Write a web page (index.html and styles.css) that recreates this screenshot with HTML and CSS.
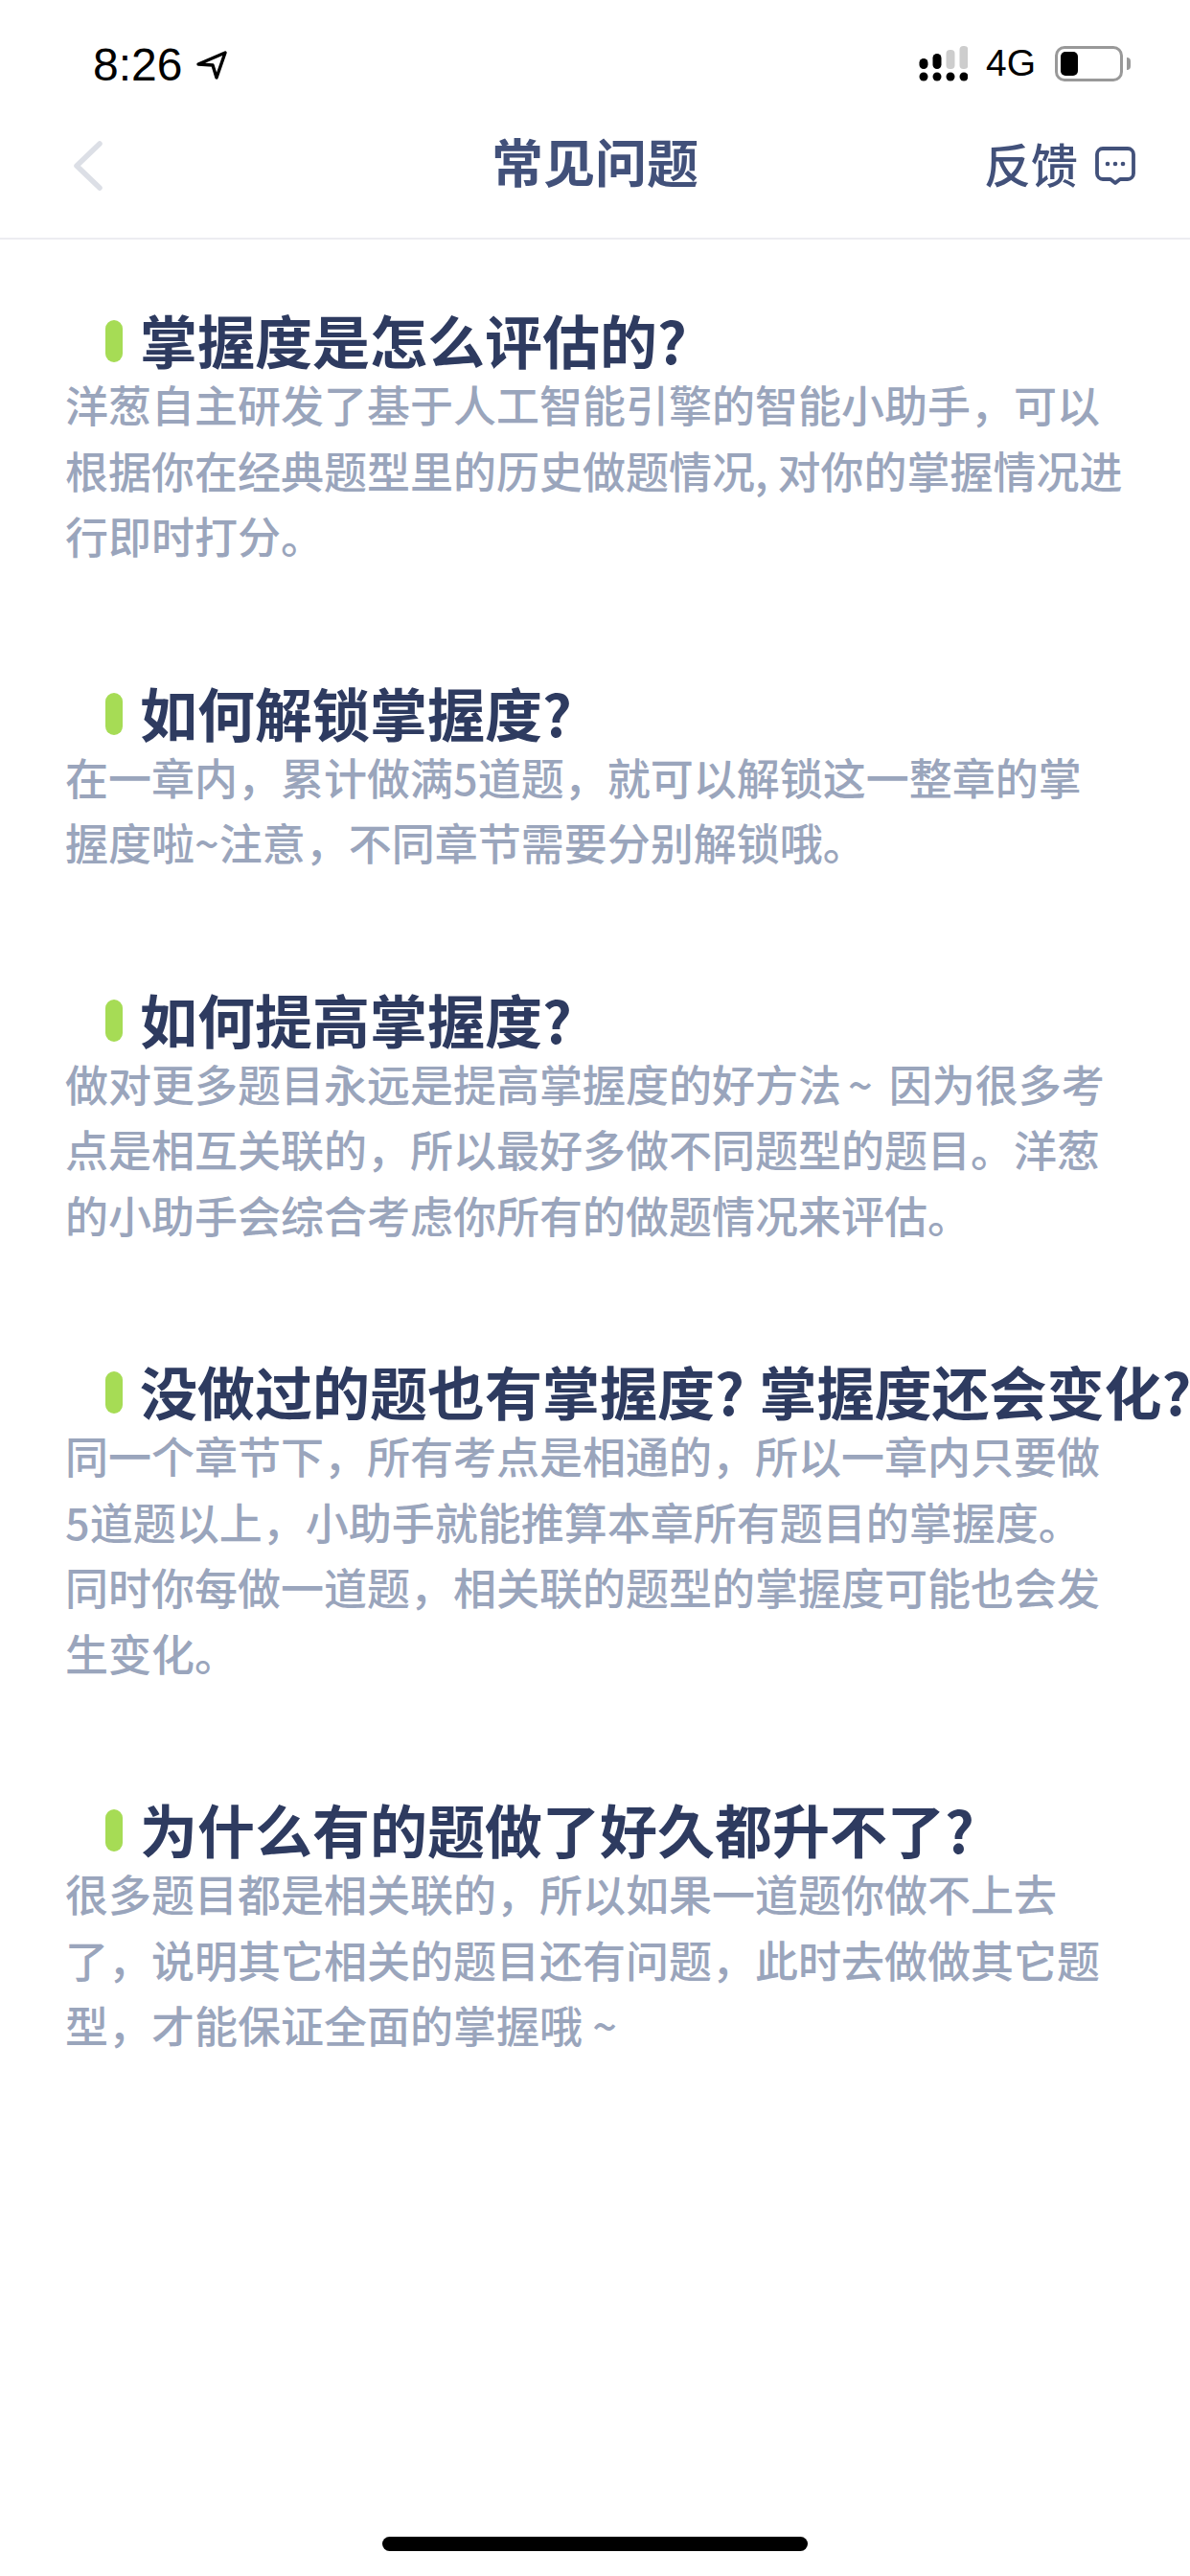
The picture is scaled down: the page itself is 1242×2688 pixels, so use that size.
FILE: index.html
```html
<!DOCTYPE html>
<html lang="zh-CN">
<head>
<meta charset="utf-8">
<title>常见问题</title>
<link rel="stylesheet" href="styles.css">
</head>
<body>
<div class="page">
  <div class="status">
    <div class="status-left">
      <span class="time">8:26</span>
      <svg class="loc" viewBox="0 0 32 30"><path d="M2 14 30 2 21 28 17 15Z" fill="none" stroke="#000" stroke-width="3.4" stroke-linejoin="round"/></svg>
    </div>
    <div class="status-right">
      <svg class="signal" viewBox="0 0 51 37">
        <g fill="#000"><circle cx="5" cy="32" r="4.5"/><circle cx="19" cy="32" r="4.5"/><circle cx="33" cy="32" r="4.5"/><circle cx="47" cy="32" r="4.5"/>
        <rect x="0.5" y="13" width="9" height="11" rx="4.5"/><rect x="14.5" y="8" width="9" height="16" rx="4.5"/></g>
        <g fill="#cdcdcd"><rect x="28.500" y="4" width="9" height="20" rx="4"/><rect x="42.5" y="0" width="9" height="24" rx="4"/></g>
      </svg>
      <span class="net">4G</span>
      <div class="battery"><div class="battery-fill"></div></div>
      <div class="battery-nub"></div>
    </div>
  </div>
  <header class="nav">
    <svg class="back" viewBox="0 0 33 54"><path d="M29 4 5 27l24 23" fill="none" stroke="#dcdfe6" stroke-width="5.500" stroke-linecap="round" stroke-linejoin="round"/></svg>
    <h1 class="nav-title">常见问题</h1>
    <div class="nav-action">
      <span class="nav-label">反馈</span>
      <svg class="chat" viewBox="0 0 42 40"><path d="M8 2h26a6 6 0 0 1 6 6v20a6 6 0 0 1-6 6h-8l-5 4-5-4H8a6 6 0 0 1-6-6V8a6 6 0 0 1 6-6Z" fill="none" stroke="#42517a" stroke-width="3.800" stroke-linejoin="round"/><circle cx="13" cy="18" r="2.300" fill="#42517a"/><circle cx="21" cy="18" r="2.300" fill="#42517a"/><circle cx="29" cy="18" r="2.300" fill="#42517a"/></svg>
    </div>
  </header>
  <main class="faq">
    <section class="item">
      <h2 class="q">掌握度是怎么评估的?</h2>
      <p class="a">洋葱自主研发了基于人工智能引擎的智能小助手，可以根据你在经典题型里的历史做题情况, 对你的掌握情况进行即时打分。</p>
    </section>
    <section class="item">
      <h2 class="q">如何解锁掌握度?</h2>
      <p class="a">在一章内，累计做满5道题，就可以解锁这一整章的掌握度啦~注意，不同章节需要分别解锁哦。</p>
    </section>
    <section class="item">
      <h2 class="q">如何提高掌握度?</h2>
      <p class="a">做对更多题目永远是提高掌握度的好方法<span class="tilde">~</span> 因为很多考点是相互关联的，所以最好多做不同题型的题目。洋葱的小助手会综合考虑你所有的做题情况来评估。</p>
    </section>
    <section class="item">
      <h2 class="q">没做过的题也有掌握度? 掌握度还会变化?</h2>
      <p class="a">同一个章节下，所有考点是相通的，所以一章内只要做5道题以上，小助手就能推算本章所有题目的掌握度。同时你每做一道题，相关联的题型的掌握度可能也会发生变化。</p>
    </section>
    <section class="item">
      <h2 class="q">为什么有的题做了好久都升不了?</h2>
      <p class="a">很多题目都是相关联的，所以如果一道题你做不上去了，说明其它相关的题目还有问题，此时去做做其它题型，才能保证全面的掌握哦 ~</p>
    </section>
  </main>
  <div class="home"></div>
</div>
</body>
</html>
```
FILE: styles.css
```css
* { box-sizing: border-box; }
html, body { margin: 0; padding: 0; background: #fff; }
body { font-family: "Noto Sans CJK SC", "Noto Sans", sans-serif; }
.page { width: 1242px; height: 2688px; display: flex; flex-direction: column; overflow: hidden; position: relative; }

.status { height: 130px; padding: 46px 62px 0 97px; display: flex; justify-content: space-between; align-items: flex-start; }
.status-left { display: flex; align-items: center; gap: 15px; height: 44px; }
.time { font: 48px/44px "Liberation Sans", Arial, sans-serif; color: #000; }
.loc { width: 32px; height: 30px; }
.status-right { display: flex; align-items: center; height: 44px; margin-top: -2px; }
.signal { width: 51px; height: 37px; margin-right: 19px; }
.net { font: 39px/44px "Liberation Sans", Arial, sans-serif; color: #000; margin-right: 20px; }
.battery { width: 71px; height: 37px; border: 3px solid #999; border-radius: 10px; padding: 3px; }
.battery-fill { width: 18px; height: 25px; background: #000; border-radius: 5px; }
.battery-nub { width: 4px; height: 13px; margin-left: 4px; background: #999; border-radius: 0 4px 4px 0; }

.nav { height: 120px; border-bottom: 2px solid #ececf1; display: flex; align-items: center; padding: 0 57px 32px 75px; position: relative; justify-content: space-between; }
.back { width: 33px; height: 54px; }
.nav-title { position: absolute; left: 0; right: 0; top: -2px; margin: 0; text-align: center; font-size: 54px; line-height: 80px; font-weight: 700; color: #42517a; }
.nav-action { display: flex; align-items: center; gap: 18px; font-size: 49px; font-weight: 500; color: #42517a; }
.nav-label { line-height: 60px; position: relative; top: -3px; }
.chat { width: 42px; height: 40px; }

.faq { padding: 76px 70px 0 68px; display: flex; flex-direction: column; gap: 121px; }
.q { margin: -3px -70px 3px 42px; display: flex; align-items: center; gap: 18px; font-size: 60px; line-height: 62px; font-weight: 700; color: #2e3b60; white-space: nowrap; word-spacing: 2px; }
.q::before { content: ""; flex: none; width: 18px; height: 44px; margin-top: 4px; border-radius: 9px; background: #a6dc55; }
.a { margin: 0; font-size: 45px; line-height: 68.500px; font-weight: 500; color: #9aa5bc; }
.tilde { margin: 0 7px; }

.home { position: absolute; left: 399px; top: 2647px; width: 444px; height: 15px; border-radius: 8px; background: #000; }
```
